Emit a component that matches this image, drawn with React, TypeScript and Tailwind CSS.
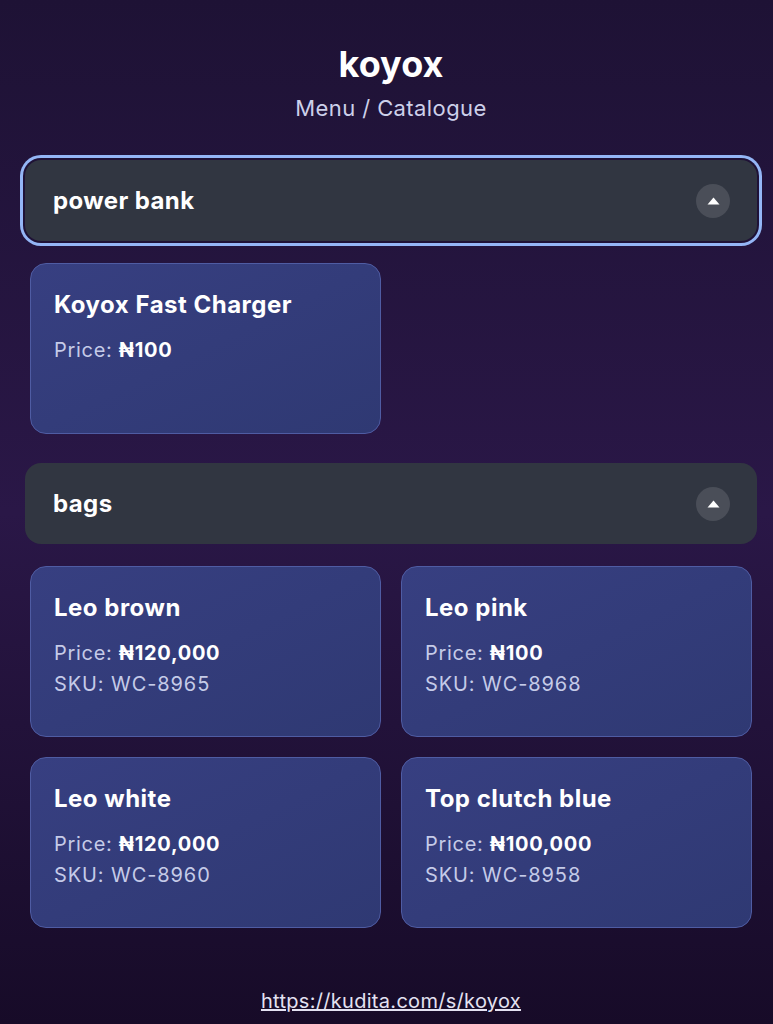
import { useState } from "react";

type Product = { name: string; price: string; sku?: string };
type Category = { id: string; title: string; items: Product[] };

const categories: Category[] = [
  { id: "pb", title: "power bank", items: [{ name: "Koyox Fast Charger", price: "₦100" }] },
  {
    id: "bags",
    title: "bags",
    items: [
      { name: "Leo brown", price: "₦120,000", sku: "WC-8965" },
      { name: "Leo pink", price: "₦100", sku: "WC-8968" },
      { name: "Leo white", price: "₦120,000", sku: "WC-8960" },
      { name: "Top clutch blue", price: "₦100,000", sku: "WC-8958" },
    ],
  },
];

function ProductCard({ p }: { p: Product }) {
  return (
    <div className="h-[171px] rounded-2xl border border-[#4f5ca3] bg-gradient-to-br from-[#373f81] to-[#2f3973] px-[23px] pt-[25px]">
      <h3 className="text-[24px] font-bold leading-[32px] tracking-[0.5px] text-white">{p.name}</h3>
      <div className="mt-[14px] text-[20px] leading-[31px] tracking-[0.7px] text-[#c5cbe8]">
        Price: <span className="font-bold text-white">{p.price}</span>
      </div>
      {p.sku && <div className="text-[20px] leading-[31px] tracking-[0.9px] text-[#c5cbe8]">SKU: {p.sku}</div>}
    </div>
  );
}

export default function App() {
  const [open, setOpen] = useState<Record<string, boolean>>({ pb: true, bags: true });

  return (
    <div
      className="min-h-[1024px] bg-gradient-to-b from-[#1e1235] via-[#2a1747] to-[#170b28] pl-[25px] pr-[16px] pt-[40px] pb-[10px] text-white"
      style={{ fontFamily: "Inter, 'Noto Sans', sans-serif" }}
    >
      <header className="text-center">
        <h1 className="text-[36px] font-bold leading-[48px]">koyox</h1>
        <p className="mt-[4px] text-[22px] leading-[32px] tracking-[0.4px] text-[#cdd0ea]">Menu / Catalogue</p>
      </header>

      <div className="mt-[36px] flex flex-col">
        {categories.map((c, i) => (
          <section key={c.id} className={i > 0 ? "mt-[29px]" : ""}>
            <button
              onClick={() => setOpen({ ...open, [c.id]: !open[c.id] })}
              className={`flex h-[81px] w-full items-center justify-between rounded-2xl bg-[#313641] pl-[28px] pr-[27px] text-left ${
                i === 0 ? "ring-[3px] ring-[#94b6f6] ring-offset-2 ring-offset-[#1f1236]" : ""
              }`}
            >
              <span className="text-[24px] font-bold leading-[32px] tracking-[0.4px] text-white">{c.title}</span>
              <span className="flex h-[34px] w-[34px] items-center justify-center rounded-full bg-[#4a4e58]">
                <svg width="13" height="8" viewBox="0 0 13 8">
                  <path d="M6.5 0.5 L12.5 7.5 L0.5 7.5 Z" fill="white" />
                </svg>
              </span>
            </button>
            {open[c.id] && (
              <div className="mt-[22px] grid grid-cols-2 gap-x-[20px] gap-y-[20px] px-[5px]">
                {c.items.map((p) => (
                  <ProductCard key={p.name} p={p} />
                ))}
              </div>
            )}
          </section>
        ))}
      </div>

      <footer className="mt-[58px] text-center">
        <a href="#" className="text-[20px] leading-[30px] tracking-[0.3px] text-[#e4e2f2] underline">
          https://kudita.com/s/koyox
        </a>
      </footer>
    </div>
  );
}
